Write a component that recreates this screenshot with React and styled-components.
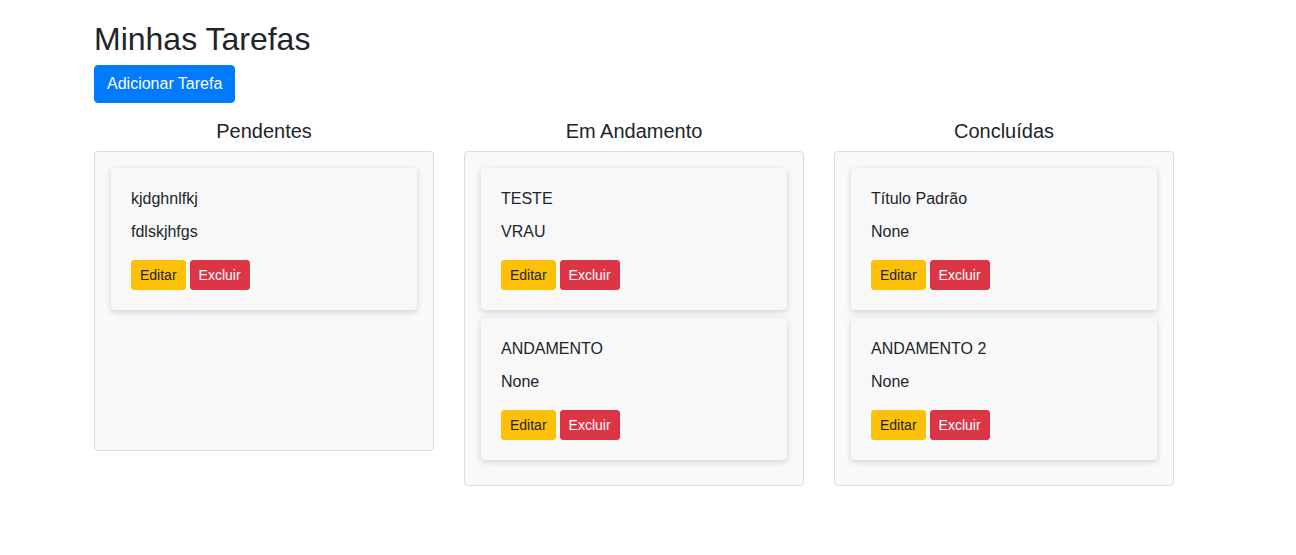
import React from "react";
import styled, { createGlobalStyle } from "styled-components";

const GlobalStyle = createGlobalStyle`
  body {
    margin: 0;
    background: #fff;
    color: #212529;
    font-family: "Liberation Sans", Arial, sans-serif;
    font-size: 16px;
    line-height: 1.5;
  }
`;

const Page = styled.div`
  max-width: 1108px;
  margin: 0 auto;
  padding-top: 20px;
`;

const Title = styled.h2`
  font-size: 32px;
  font-weight: 500;
  line-height: 1.2;
  margin: 0 0 7px;
`;

const Button = styled.button`
  font-family: inherit;
  border: 1px solid transparent;
  cursor: pointer;
  font-size: ${(p) => (p.small ? "14px" : "16px")};
  line-height: ${(p) => (p.small ? "20px" : "24px")};
  padding: ${(p) => (p.small ? "4px 8px" : "6px 12px")};
  border-radius: ${(p) => (p.small ? "3px" : "4px")};
  background: ${(p) => p.bg};
  border-color: ${(p) => p.bg};
  color: ${(p) => p.fg};
`;

const Board = styled.div`
  display: flex;
  align-items: flex-start;
  gap: 30px;
  margin-top: 16px;
`;

const Column = styled.div`
  width: 340px;
  display: flex;
  flex-direction: column;
`;

const ColumnTitle = styled.h5`
  font-size: 20px;
  font-weight: 500;
  line-height: 1.2;
  text-align: center;
  margin: 0 0 8px;
`;

const Lane = styled.div`
  min-height: 300px;
  box-sizing: border-box;
  background: #f8f9fa;
  border: 1px solid #dcdcdc;
  border-radius: 4px;
  padding: 16px 16px 17px;
`;

const Card = styled.div`
  background: #f8f8f8;
  border-radius: 4px;
  box-shadow: 0 2px 6px rgba(0, 0, 0, 0.16);
  padding: 19px 20px 20px;
  margin-bottom: 8px;
`;

const Line = styled.p`
  margin: 0 0 ${(p) => (p.last ? "16px" : "9px")};
`;

const Actions = styled.div`
  display: flex;
  gap: 4px;
`;

const columns = [
  {
    name: "Pendentes",
    tasks: [{ title: "kjdghnlfkj", desc: "fdlskjhfgs" }],
  },
  {
    name: "Em Andamento",
    tasks: [
      { title: "TESTE", desc: "VRAU" },
      { title: "ANDAMENTO", desc: "None" },
    ],
  },
  {
    name: "Concluídas",
    tasks: [
      { title: "Título Padrão", desc: "None" },
      { title: "ANDAMENTO 2", desc: "None" },
    ],
  },
];

const App = () => {
  return (
    <>
      <GlobalStyle />
      <Page>
        <Title>Minhas Tarefas</Title>
        <Button bg="#007bff" fg="#fff">
          Adicionar Tarefa
        </Button>
        <Board>
          {columns.map((col) => (
            <Column key={col.name}>
              <ColumnTitle>{col.name}</ColumnTitle>
              <Lane>
                {col.tasks.map((t) => (
                  <Card key={t.title}>
                    <Line>{t.title}</Line>
                    <Line last>{t.desc}</Line>
                    <Actions>
                      <Button small bg="#ffc107" fg="#212529">
                        Editar
                      </Button>
                      <Button small bg="#dc3545" fg="#fff">
                        Excluir
                      </Button>
                    </Actions>
                  </Card>
                ))}
              </Lane>
            </Column>
          ))}
        </Board>
      </Page>
    </>
  );
};

export default App;
